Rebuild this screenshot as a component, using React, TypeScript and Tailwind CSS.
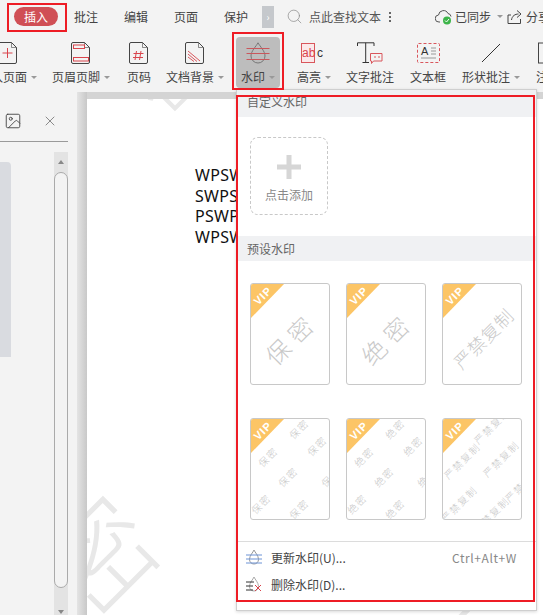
import { Image, Search, X } from "lucide-react";
import type { ReactNode } from "react";

const cjk = "font-['Noto_Sans_CJK_SC','Noto_Sans',sans-serif]";

function Caret() {
  return <span className="h-0 w-0 border-x-[3px] border-t-[3px] border-x-transparent border-t-[#999]" />;
}

function DocIcon({ children }: { children?: ReactNode }) {
  return (
    <svg width="20" height="22" viewBox="0 0 20 22" fill="none">
      <path d="M2 .5H13.5L18.5 5.5V20a1.5 1.5 0 0 1-1.5 1.5H2A1.5 1.5 0 0 1 .5 20V2A1.5 1.5 0 0 1 2 .5Z" stroke="#444" />
      <path d="M13.5 .5V5.5H18.5" stroke="#444" strokeWidth=".6" />
      {children}
    </svg>
  );
}

function WatermarkIcon() {
  return (
    <svg width="24" height="22" viewBox="0 0 24 22" fill="none">
      <path d="M12 .8C10 4.5 5 9 5 14a7 7 0 0 0 14 0C19 9 14 4.5 12 .8Z" stroke="#777" />
      <path d="M.5 6.5H23.5M.5 11.5H23.5M.5 17.5H23.5" stroke="#c9575c" />
    </svg>
  );
}

function HighlightIcon() {
  return (
    <svg width="26" height="22" viewBox="0 0 26 22" fill="none">
      <rect x=".5" y="1.5" width="13" height="19" stroke="#d9565c" fill="#fbe9ea" />
      <text x="1" y="15" fontSize="12" fill="#d9444c" fontFamily="Liberation Sans">ab</text>
      <text x="16" y="15" fontSize="12" fill="#333" fontFamily="Liberation Sans">c</text>
    </svg>
  );
}

function NoteIcon() {
  return (
    <svg width="26" height="22" viewBox="0 0 26 22" fill="none">
      <path d="M.5 4V.8H17V4M8.7 .8V20.5M5.500 20.500H12" stroke="#333" />
      <path d="M13.500 11.500H25V19H16.500L14.500 21.500V19H13.500Z" stroke="#d9565c" fill="#f3f3f3" />
      <path d="M17 15H19M21 15H23" stroke="#d9565c" />
    </svg>
  );
}

function TextBoxIcon() {
  return (
    <svg width="23" height="21" viewBox="0 0 23 21" fill="none">
      <rect x=".5" y=".5" width="22" height="19" rx="1" stroke="#d9565c" strokeDasharray="3 2" />
      <text x="4" y="12" fontSize="11" fill="#333" fontFamily="Liberation Sans">A</text>
      <path d="M14 5H19M14 8H19M14 11H19M4 15H19" stroke="#999" />
    </svg>
  );
}

function LineIcon() {
  return (
    <svg width="22" height="22" viewBox="0 0 22 22" fill="none">
      <path d="M2 20L20 2" stroke="#333" />
    </svg>
  );
}

function ToolItem({ label, icon, width, caret, active }: { label: string; icon: ReactNode; width: string; caret?: boolean; active?: boolean }) {
  return (
    <div className={`flex h-[51px] shrink-0 flex-col items-center rounded-sm pt-[5px] ${width} ${active ? "bg-[#bdbdbd]" : ""}`}>
      <div className="flex h-[22px] items-center justify-center">{icon}</div>
      <div className="mt-[5px] flex h-4 items-center gap-[4px] whitespace-nowrap text-[12px] text-[#444]">
        <span>{label}</span>
        {caret && <Caret />}
      </div>
    </div>
  );
}

function VipBadge() {
  return (
    <>
      <svg className="absolute left-0 top-0" width="34" height="35" viewBox="0 0 34 35">
        <polygon points="0,0 33,0 0,34" fill="#fcc566" />
      </svg>
      <span className="absolute left-[12px] top-[12px] -translate-x-1/2 -translate-y-1/2 -rotate-45 font-['Liberation_Sans',sans-serif] text-[11px] font-bold leading-none tracking-[1px] text-white">
        VIP
      </span>
    </>
  );
}

function Thumb({ children }: { children: ReactNode }) {
  return (
    <div className="relative h-[102px] w-[80px] overflow-hidden rounded-[3px] border border-[#c8c8c8] bg-white">
      {children}
      <VipBadge />
    </div>
  );
}

function BigThumb({ text, small }: { text: string; small?: boolean }) {
  return (
    <Thumb>
      <span
        className={`absolute left-[40px] top-[54px] -translate-x-1/2 -translate-y-1/2 -rotate-45 whitespace-nowrap font-light leading-none text-[#c9c9c9] ${
          small ? "text-[18px] tracking-[1px]" : "text-[24px] tracking-[7px]"
        }`}
      >
        {text}
      </span>
    </Thumb>
  );
}

const twoCharSpots = [
  "left-[48px] top-[10px]",
  "left-[66px] top-[27px]",
  "left-[17px] top-[38px]",
  "left-[37px] top-[58px]",
  "left-[80px] top-[58px]",
  "left-[10px] top-[85px]",
  "left-[48px] top-[90px]",
];

const fourCharSpots = [
  "left-[49px] top-[7px]",
  "left-[19px] top-[42px]",
  "left-[58px] top-[40px]",
  "left-[80px] top-[65px]",
  "left-[16px] top-[85px]",
  "left-[48px] top-[96px]",
];

function TiledThumb({ text, spots }: { text: string; spots: string[] }) {
  return (
    <Thumb>
      {spots.map((spot) => (
        <span
          key={spot}
          className={`absolute -translate-x-1/2 -translate-y-1/2 -rotate-45 whitespace-nowrap text-[10px] font-light leading-none tracking-[1.5px] text-[#c6c6c6] ${spot}`}
        >
          {text}
        </span>
      ))}
    </Thumb>
  );
}

function SectionHeader({ label, className }: { label: string; className: string }) {
  return (
    <div className={`bg-[#f0f1f3] pl-[10px] text-[12px] text-[#666] ${className}`}>{label}</div>
  );
}

function WatermarkMenu() {
  return (
    <div className="absolute left-[236px] top-[89px] flex h-[522px] w-[301px] flex-col border border-[#cfcfcf] bg-white shadow-[0_1px_3px_rgba(0,0,0,0.15)]">
      <SectionHeader label="自定义水印" className="h-[27px] pb-[3px] leading-[24px]" />
      <div className="ml-[13px] mt-[20px] flex h-[78px] w-[78px] flex-col items-center rounded-lg border border-dashed border-[#c8c8c8] pt-[17px]">
        <svg width="24" height="24" viewBox="0 0 24 24">
          <path d="M9.5 0H14.5V9.5H24V14.5H14.5V24H9.5V14.5H0V9.5H9.5Z" fill="#d6d6d6" />
        </svg>
        <span className="mt-[8px] text-[12px] leading-4 text-[#888]">点击添加</span>
      </div>
      <SectionHeader label="预设水印" className="mt-[21px] h-[25px] leading-[25px]" />
      <div className="ml-[13px] mt-[22px] grid grid-cols-[80px_80px_80px] gap-x-4 gap-y-[33px]">
        <BigThumb text="保密" />
        <BigThumb text="绝密" />
        <BigThumb text="严禁复制" small />
        <TiledThumb text="保密" spots={twoCharSpots} />
        <TiledThumb text="绝密" spots={twoCharSpots} />
        <TiledThumb text="严禁复制" spots={fourCharSpots} />
      </div>
      <div className="mt-[21px] h-px bg-[#dcdcdc]" />
      <div className="mt-[2px] flex h-[27px] items-center pl-[8px] text-[12px] text-[#444]">
        <svg width="18" height="18" viewBox="0 0 18 18" fill="none">
          <path d="M9 1C8 3.500 4.500 6.500 4.500 10.500a4.500 4.500 0 0 0 9 0C13.500 6.500 10 3.500 9 1Z" stroke="#999" />
          <path d="M1 6H17M1 10H17M1 14H17" stroke="#6d93d6" />
        </svg>
        <span className="ml-[8px]">更新水印(U)...</span>
        <span className="ml-auto mr-[19px] tracking-[0.6px] text-[#888]">Ctrl+Alt+W</span>
      </div>
      <div className="flex h-[27px] items-center pl-[8px] text-[12px] text-[#444]">
        <svg width="18" height="18" viewBox="0 0 18 18" fill="none">
          <path d="M9 1C8 3.500 4.500 6.500 4.500 10.500a4.500 4.500 0 0 0 9 0C13.500 6.500 10 3.500 9 1Z" stroke="#aaa" />
          <path d="M1 6H9M1 10H8M1 14H8" stroke="#333" />
          <path d="M10 9L16 15M16 9L10 15" stroke="#d9444c" />
        </svg>
        <span className="ml-[8px]">删除水印(D)...</span>
      </div>
    </div>
  );
}

function Sidebar() {
  return (
    <div className="flex w-[77px] shrink-0 flex-col bg-[#f3f3f3] pr-[9px]">
      <div className="flex h-[50px] items-center gap-[20px] border-b border-[#9a9a9a] pl-[4px] pt-[8px]">
        <Image size={18} strokeWidth={1.2} color="#444" />
        <X size={16} strokeWidth={1} color="#555" />
      </div>
      <div className="flex flex-1 justify-between">
        <div className="mt-[20px] h-[195px] w-[11px] rounded-tr-sm bg-[#d9dbe0]" />
        <div className="mt-[10px] flex w-[14px] flex-col bg-[#e3e3e3]">
          <div className="flex h-[20px] items-center justify-center">
            <span className="h-0 w-0 border-x-[3px] border-b-[4px] border-x-transparent border-b-[#888]" />
          </div>
          <div className="flex-1 rounded-full border border-[#aaa] bg-[#f3f3f3]" />
          <div className="flex h-[27px] items-end justify-center pb-[1px]">
            <span className="h-0 w-0 border-x-[3px] border-t-[4px] border-x-transparent border-t-[#888]" />
          </div>
        </div>
      </div>
    </div>
  );
}

function DocumentPage() {
  return (
    <div className="relative mt-[7px] flex-1 overflow-hidden bg-white pl-[108px] pt-[66px] font-['Noto_Sans',sans-serif] text-[16px] leading-[20.6px] tracking-[0.3px] text-[#111]">
      <span className={`absolute left-[-32px] top-[492px] -translate-x-1/2 -translate-y-1/2 -rotate-45 whitespace-nowrap text-[110px] font-light leading-none text-[#e8e8e8] ${cjk}`}>保密</span>
      <span className={`absolute left-[80px] top-[-38px] -translate-x-1/2 -translate-y-1/2 -rotate-45 text-[90px] font-light leading-none text-[#e8e8e8] ${cjk}`}>密</span>
      <span className={`absolute left-[388px] top-[552px] -translate-x-1/2 -translate-y-1/2 -rotate-45 text-[120px] font-light leading-none text-[#e8e8e8] ${cjk}`}>密</span>
      <div className="relative">
        <div>WPSWPSW</div>
        <div>SWPSWPS</div>
        <div>PSWPSWP</div>
        <div>WPSWPSW</div>
      </div>
    </div>
  );
}

export default function App() {
  return (
    <div className={`relative flex h-[615px] w-[543px] flex-col overflow-hidden bg-[#f3f3f3] ${cjk}`}>
      <div className="flex h-[33px] w-max shrink-0 items-center whitespace-nowrap text-[12px] text-[#444]">
        <div className="ml-[14px] flex h-[19px] w-[44px] items-center justify-center rounded-full bg-[#d04f55] text-white">插入</div>
        <span className="ml-[16px]">批注</span>
        <span className="ml-[26px]">编辑</span>
        <span className="ml-[26px]">页面</span>
        <span className="ml-[26px]">保护</span>
        <div className="ml-[14px] flex h-[22px] w-[12px] items-center justify-center bg-[#c5c8cc] text-[10px] text-white">›</div>
        <Search size={17} strokeWidth={1} color="#888" className="ml-[12px]" />
        <span className="ml-[6px] text-[#555]">点此查找文本</span>
        <span className="ml-[8px] flex flex-col gap-[2px]">
          <span className="h-[2px] w-[2px] bg-[#666]" />
          <span className="h-[2px] w-[2px] bg-[#666]" />
          <span className="h-[2px] w-[2px] bg-[#666]" />
        </span>
        <svg className="ml-[44px]" width="18" height="16" viewBox="0 0 18 16" fill="none">
          <path d="M5 13H4a3.500 3.500 0 0 1-.5-7A5 5 0 0 1 13 4.500a3.500 3.500 0 0 1 3 3" stroke="#555" />
          <circle cx="12" cy="11.500" r="4" fill="#3db54a" />
          <path d="M10 11.500L11.500 13L14 10" stroke="#fff" />
        </svg>
        <span className="ml-[2px] text-[#444]">已同步</span>
        <span className="ml-[6px] flex"><Caret /></span>
        <svg className="ml-[4px]" width="16" height="16" viewBox="0 0 16 16" fill="none">
          <path d="M4 6H1V14.500H13.500V10" stroke="#444" />
          <path d="M4.500 11C5 7 8 5 11.500 5M10 1.500L14 5L10 8.500" stroke="#444" />
        </svg>
        <span className="ml-[3px]">分享</span>
      </div>

      <div className="flex h-[59px] shrink-0 pt-[4px]">
        <div className="ml-[-22px] flex">
          <ToolItem
            label="插入页面"
            caret
            width="w-[60px]"
            icon={<DocIcon><path d="M4.500 11H14.500M9.500 6V16" stroke="#d9444c" /></DocIcon>}
          />
          <ToolItem
            label="页眉页脚"
            caret
            width="w-[86px]"
            icon={<DocIcon><rect x="2.500" y="3" width="11" height="3.500" stroke="#d9444c" /><rect x="2.500" y="15.500" width="15" height="3.500" stroke="#d9444c" /></DocIcon>}
          />
          <ToolItem
            label="页码"
            width="w-[30px]"
            icon={<DocIcon><path d="M7.500 9L6 18M12 9L10.500 18M4.500 11.500H14.500M4 15.500H14" stroke="#d9444c" /></DocIcon>}
          />
          <ToolItem
            label="文档背景"
            caret
            width="w-[82px]"
            icon={<DocIcon><path d="M3 9L15 19M3 12L12 19.500M3 15L9 19.500" stroke="#d9565c" /></DocIcon>}
          />
          <ToolItem label="水印" caret active width="w-[44px]" icon={<WatermarkIcon />} />
          <ToolItem label="高亮" caret width="w-[68px]" icon={<HighlightIcon />} />
          <ToolItem label="文字批注" width="w-[44px]" icon={<NoteIcon />} />
          <ToolItem label="文本框" width="w-[72px]" icon={<TextBoxIcon />} />
          <ToolItem label="形状批注" caret width="w-[54px]" icon={<LineIcon />} />
          <ToolItem
            label="注释"
            width="w-[60px]"
            icon={<svg width="20" height="22" viewBox="0 0 20 22" fill="none"><rect x=".5" y="1" width="17" height="20" stroke="#444" /></svg>}
          />
        </div>
      </div>

      <div className="flex min-h-0 flex-1 bg-[#d4d4d4]">
        <Sidebar />
        <div className="w-[10px] shrink-0 bg-gradient-to-r from-[#e4e4e4] to-[#c8c8c8]" />
        <DocumentPage />
      </div>

      <WatermarkMenu />

      <div className="absolute left-[7px] top-[3px] h-[29px] w-[60px] border-2 border-[#ee1c25]" />
      <div className="absolute left-[232px] top-[32px] h-[58px] w-[52px] border-2 border-[#ee1c25]" />
      <div className="absolute left-[236px] top-[95px] h-[507px] w-[299px] border-2 border-[#ee1c25]" />
    </div>
  );
}
